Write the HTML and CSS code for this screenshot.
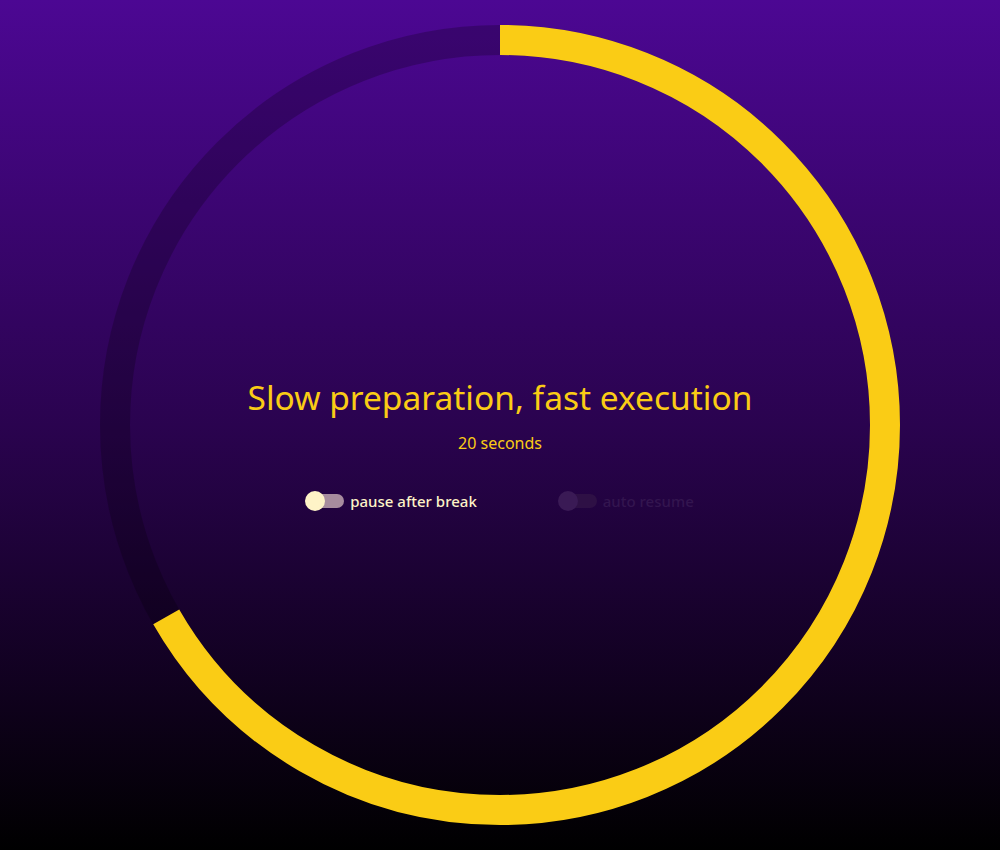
FILE: index.html
```html
<!DOCTYPE html>
<html>
<head>
<meta charset="utf-8">
<link rel="stylesheet" href="styles.css">
</head>
<body>
<main class="stage">
  <div class="timer">
    <svg class="ring" viewBox="0 0 800 800" width="800" height="800">
      <circle class="track" cx="400" cy="400" r="385"></circle>
      <circle class="progress" cx="400" cy="400" r="385" stroke-dasharray="1612.7 2419.0" transform="rotate(-90 400 400)"></circle>
    </svg>
    <div class="content">
      <h1 class="title">Slow preparation, fast execution</h1>
      <p class="subtitle">20 seconds</p>
      <div class="toggles">
        <label class="toggle on"><span class="switch"><span class="knob"></span></span><span class="label">pause after break</span></label>
        <label class="toggle off"><span class="switch"><span class="knob"></span></span><span class="label">auto resume</span></label>
      </div>
    </div>
  </div>
</main>
</body>
</html>
```
FILE: styles.css
```css
html, body {
  margin: 0;
  padding: 0;
}
body {
  width: 1000px;
  height: 850px;
  background: linear-gradient(to bottom, #4c0793 0%, #2a034f 50%, #000000 100%);
  font-family: "Noto Sans", "Open Sans", sans-serif;
  overflow: hidden;
}
.stage {
  height: 850px;
  display: flex;
  justify-content: center;
  align-items: center;
}
.timer {
  display: grid;
  width: 800px;
  height: 800px;
}
.ring, .content {
  grid-area: 1 / 1;
}
.ring {
  display: block;
}
.track {
  fill: none;
  stroke: rgba(0, 0, 0, 0.22);
  stroke-width: 30;
}
.progress {
  fill: none;
  stroke: #facc15;
  stroke-width: 30;
}
.content {
  display: flex;
  flex-direction: column;
  align-items: center;
  justify-content: flex-start;
  padding-top: 352px;
}
.title {
  margin: 0;
  color: #facc15;
  font-size: 33.5px;
  font-weight: 400;
  line-height: 40px;
}
.subtitle {
  margin: 16px 0 0;
  color: #facc15;
  font-size: 16px;
  line-height: 20px;
}
.toggles {
  margin-top: 38px;
  display: flex;
  gap: 82px;
  align-items: center;
}
.toggle {
  display: flex;
  align-items: center;
  gap: 6px;
  height: 20px;
}
.switch {
  display: flex;
  align-items: center;
  width: 38px;
  height: 14px;
  border-radius: 7px;
  background: #a78c9e;
}
.knob {
  width: 20px;
  height: 20px;
  border-radius: 50%;
  background: #fef3c7;
  margin-left: -1px;
}
.label {
  color: #fef3c7;
  font-size: 15px;
  font-weight: 500;
  line-height: 20px;
}
.toggle.off .switch {
  background: #2e1045;
}
.toggle.off .knob {
  background: #3a1a55;
}
.toggle.off .label {
  color: #33154f;
}
```
